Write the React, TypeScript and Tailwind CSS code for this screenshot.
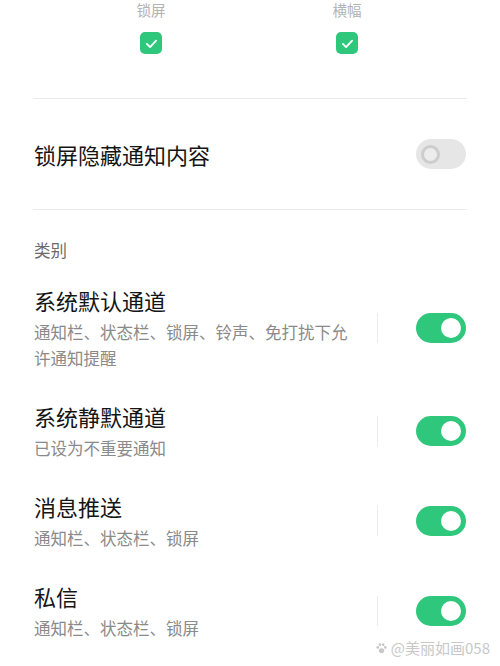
const FONT = "font-['Noto_Sans_CJK_SC','Noto_Sans',sans-serif]";

interface Channel {
  title: string;
  desc: string;
}

const channels: Channel[] = [
  { title: '系统默认通道', desc: '通知栏、状态栏、锁屏、铃声、免打扰下允许通知提醒' },
  { title: '系统静默通道', desc: '已设为不重要通知' },
  { title: '消息推送', desc: '通知栏、状态栏、锁屏' },
  { title: '私信', desc: '通知栏、状态栏、锁屏' },
];

function CheckBox() {
  return (
    <div className="w-[22px] h-[22px] rounded-[5px] bg-[#2fc77b] flex items-center justify-center">
      <svg className="w-[17px] h-[17px]" viewBox="0 0 24 24" fill="none" stroke="white" strokeWidth={2.6} strokeLinecap="round" strokeLinejoin="round">
        <path d="M5.5 12.5l4.5 4.5L18.5 8" />
      </svg>
    </div>
  );
}

function Toggle({ on }: { on: boolean }) {
  return on ? (
    <div className="w-[50px] h-[30px] rounded-full bg-[#2fc77b] flex items-center justify-end pr-[5px] shrink-0">
      <span className="w-[20px] h-[20px] rounded-full bg-white" />
    </div>
  ) : (
    <div className="w-[50px] h-[30px] rounded-full bg-[#e6e6e6] flex items-center pl-[5px] shrink-0">
      <span className="w-[19px] h-[19px] rounded-full border-[3px] border-[#cdcdcd] bg-[#ececec]" />
    </div>
  );
}

export default function App() {
  return (
    <div className={`relative w-[500px] h-[666px] bg-white overflow-hidden ${FONT}`}>
      {/* top options */}
      <div className="flex pt-[2px] pl-[121px] gap-[136px]">
        {['锁屏', '横幅'].map((l) => (
          <div key={l} className="w-[60px] flex flex-col items-center">
            <span className="text-[14.5px] leading-[15px] text-[#b3b3b3]">{l}</span>
            <div className="mt-[15px]">
              <CheckBox />
            </div>
          </div>
        ))}
      </div>

      <div className="mx-[33px] mt-[44px] h-px bg-[#ebebeb]" />

      <div className="h-[110px] flex items-center justify-between pl-[34px] pr-[34px]">
        <span className="text-[22px] leading-[30px] text-[#151515]">锁屏隐藏通知内容</span>
        <Toggle on={false} />
      </div>

      <div className="mx-[33px] h-px bg-[#ebebeb]" />

      <div className="pl-[34px] mt-[27px] text-[16.5px] leading-[26px] text-[#6b6b6b]">类别</div>

      <div className="mt-[22px] flex flex-col gap-[30px]">
        {channels.map((c) => (
          <div key={c.title} className="flex items-center pl-[34px] pr-[34px]">
            <div className="w-[326px] flex flex-col gap-[4px]">
              <span className="text-[22px] leading-[30px] text-[#151515]">{c.title}</span>
              <span className="text-[16.5px] leading-[26px] text-[#8a8a8a]">{c.desc}</span>
            </div>
            <div className="ml-[17px] w-px h-[30px] bg-[#ececec]" />
            <div className="ml-auto">
              <Toggle on />
            </div>
          </div>
        ))}
      </div>

      {/* watermark */}
      <div className="absolute right-[10px] bottom-[10px] flex items-center gap-[3px] text-[15px] leading-[16px] text-[#c8c8c8] [text-shadow:0_0_2px_#fff]">
        <svg className="w-[13px] h-[13px]" viewBox="0 0 24 24" fill="#c8c8c8">
          <ellipse cx="12" cy="16" rx="5" ry="4.5" />
          <circle cx="5" cy="10" r="2.5" />
          <circle cx="9" cy="5" r="2.5" />
          <circle cx="15" cy="5" r="2.5" />
          <circle cx="19" cy="10" r="2.5" />
        </svg>
        <span>@美丽如画058</span>
      </div>
    </div>
  );
}
